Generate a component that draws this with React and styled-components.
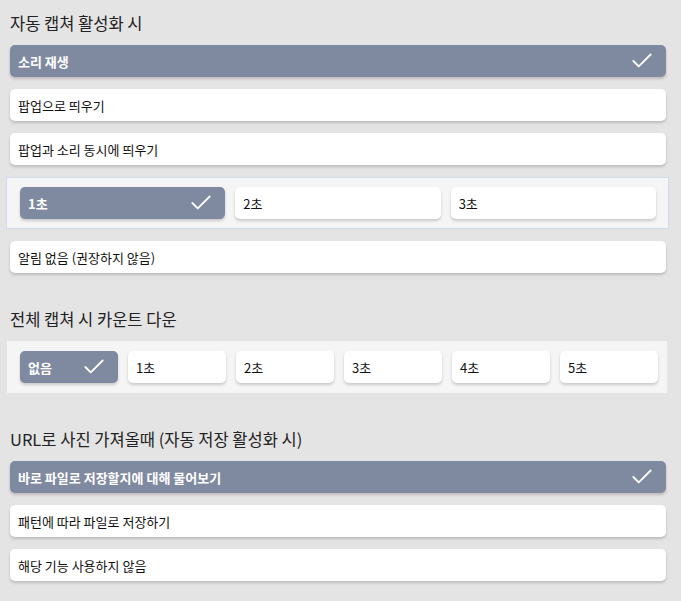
import React, { useState } from 'react';
import styled, { createGlobalStyle } from 'styled-components';

const GlobalStyle = createGlobalStyle`
  body {
    margin: 0;
    background: #e4e4e4;
    font-family: 'Noto Sans CJK KR', 'Noto Sans', sans-serif;
  }
`;

const CheckIcon = ({ size = 26 }) => (
  <svg width={size} height={size} viewBox="0 0 24 24" fill="none" stroke="#fff" strokeWidth="1.7" strokeLinecap="round" strokeLinejoin="round">
    <path d="M20 6 9 17l-5-5" />
  </svg>
);

const Option = ({ label, selected, onClick }) => (
  <OptionButton $selected={selected} onClick={onClick}>
    <span>{label}</span>
    {selected && <CheckIcon />}
  </OptionButton>
);

const App = () => {
  const [capture, setCapture] = useState(0);
  const [delay, setDelay] = useState(0);
  const [countdown, setCountdown] = useState(0);
  const [url, setUrl] = useState(0);

  return (
    <Page>
      <GlobalStyle />

      {/* 자동 캡처 */}
      <Section>
        <Title>자동 캡쳐 활성화 시</Title>
        <List>
          <Option label="소리 재생" selected={capture === 0} onClick={() => setCapture(0)} />
          <Option label="팝업으로 띄우기" selected={capture === 1} onClick={() => setCapture(1)} />
          <Option label="팝업과 소리 동시에 띄우기" selected={capture === 2} onClick={() => setCapture(2)} />
          <SubBox $bordered>
            {['1초', '2초', '3초'].map((t, i) => (
              <Option key={t} label={t} selected={delay === i} onClick={() => setDelay(i)} />
            ))}
          </SubBox>
          <Option label="알림 없음 (권장하지 않음)" selected={capture === 3} onClick={() => setCapture(3)} />
        </List>
      </Section>

      {/* 카운트 다운 */}
      <Section>
        <Title>전체 캡쳐 시 카운트 다운</Title>
        <SubBox>
          {['없음', '1초', '2초', '3초', '4초', '5초'].map((t, i) => (
            <Option key={t} label={t} selected={countdown === i} onClick={() => setCountdown(i)} />
          ))}
        </SubBox>
      </Section>

      {/* URL */}
      <Section>
        <Title>URL로 사진 가져올때 (자동 저장 활성화 시)</Title>
        <List>
          <Option label="바로 파일로 저장할지에 대해 물어보기" selected={url === 0} onClick={() => setUrl(0)} />
          <Option label="패턴에 따라 파일로 저장하기" selected={url === 1} onClick={() => setUrl(1)} />
          <Option label="해당 기능 사용하지 않음" selected={url === 2} onClick={() => setUrl(2)} />
        </List>
      </Section>
    </Page>
  );
};

export default App;

// Styled Components
const Page = styled.div`
  width: 656px;
  padding: 12px 0 20px 10px;
`;

const Section = styled.section`
  & + & {
    margin-top: 35px;
  }
`;

const Title = styled.h2`
  margin: 0 0 11px;
  height: 22px;
  line-height: 22px;
  font-size: 16.5px;
  font-weight: 400;
  color: #222;
`;

const List = styled.div`
  display: flex;
  flex-direction: column;
  gap: 12px;
`;

const SubBox = styled.div`
  display: flex;
  gap: 10px;
  background: #f5f5f5;
  border: ${(p) => (p.$bordered ? '1px solid #d2dbec' : 'none')};
  margin: ${(p) => (p.$bordered ? '0 -3px 0 -4px' : '0 -1px 0 -3px')};
  padding: ${(p) => (p.$bordered ? '9px 12px 9px 13px' : '10px 9px 10px 13px')};

  & > * {
    flex: 1 1 0;
    min-width: 0;
  }
`;

const OptionButton = styled.div`
  display: flex;
  align-items: center;
  justify-content: space-between;
  height: 32px;
  flex-shrink: 0;
  box-sizing: border-box;
  padding: 0 11px 0 8px;
  border-radius: 5px;
  background: ${(p) => (p.$selected ? '#7f8aa1' : '#ffffff')};
  color: ${(p) => (p.$selected ? '#ffffff' : '#111')};
  font-size: 13px;
  font-weight: ${(p) => (p.$selected ? 700 : 400)};
  box-shadow: 0 2px 3px rgba(0, 0, 0, 0.18);
  cursor: pointer;

  svg {
    flex-shrink: 0;
  }
`;
